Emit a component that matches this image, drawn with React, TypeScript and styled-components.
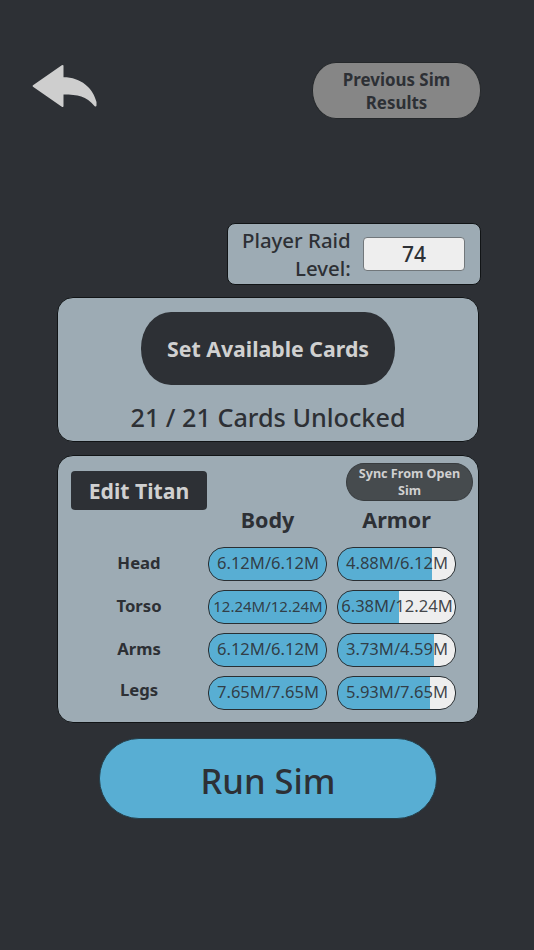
import React from "react";
import styled, { createGlobalStyle } from "styled-components";

const ink = "#2d3035";
const slate = "#9dabb4";
const blue = "#58aed3";

const GlobalStyle = createGlobalStyle`
  *, *::before, *::after { box-sizing: border-box; }
  html, body { margin: 0; background: ${ink}; }
  body { font-family: "Noto Sans", "Open Sans", sans-serif; color: ${ink}; }
  button, input { font: inherit; color: inherit; margin: 0; padding: 0; border: 0; }
`;

const Screen = styled.main`
  display: flex;
  flex-direction: column;
  width: 534px;
  height: 950px;
  padding: 62px 53px 0 32px;
  overflow: hidden;
  background: ${ink};
`;

const TopBar = styled.header`
  display: flex;
  justify-content: space-between;
  align-items: flex-start;
  height: 161px;
`;

const BackButton = styled.button`
  width: 66px;
  height: 48px;
  background: none;
  svg { display: block; }
`;

const Label = styled.span<{ $size: number; $weight?: number; $line?: number; $shift?: number; $drop?: number }>`
  display: block;
  white-space: pre-line;
  font-size: ${(p) => p.$size}px;
  font-weight: ${(p) => p.$weight ?? 700};
  line-height: ${(p) => (p.$line ? `${p.$line}px` : 1)};
  padding-top: ${(p) => p.$drop ?? 0}px;
  padding-bottom: ${(p) => p.$shift ?? 0}px;
`;

const ResultsButton = styled.button`
  display: flex;
  align-items: center;
  justify-content: center;
  width: 169px;
  height: 57px;
  border: 1px solid #25282b;
  border-radius: 24px / 28px;
  background: #868686;
  text-align: center;
`;

const Panel = styled.section`
  border: 1.5px solid #111416;
  border-radius: 16px;
  background: ${slate};
`;

const LevelPanel = styled(Panel)`
  display: flex;
  align-items: center;
  justify-content: space-between;
  align-self: flex-end;
  width: 254px;
  height: 62px;
  padding: 0 15px 0 14px;
  border-radius: 8px;
  text-align: right;
`;

const LevelInput = styled.input`
  width: 102px;
  height: 34px;
  && { border: 1px solid #71777b; }
  border-radius: 4px;
  background: #eee;
  text-align: center;
  && { font-size: 21px; font-weight: 500; }
`;

const CardsPanel = styled(Panel)`
  display: flex;
  flex-direction: column;
  align-items: center;
  width: 422px;
  height: 145px;
  margin: 12px 0 0 25px;
  padding-top: 14px;
`;

const CardsButton = styled.button`
  width: 254px;
  height: 73px;
  margin-bottom: 14px;
  border-radius: 30px / 36px;
  background: ${ink};
  display: flex;
  align-items: center;
  justify-content: center;
  && { color: #d0d0d0; }
`;

const TitanPanel = styled(Panel)`
  width: 422px;
  height: 268px;
  margin: 13px 0 0 25px;
`;

const TitanHeader = styled.div`
  display: flex;
  justify-content: space-between;
  height: 50px;
  padding: 7px 5px 0 13px;
`;

const EditButton = styled.button`
  width: 136px;
  height: 39px;
  margin-top: 8px;
  border-radius: 4px;
  background: ${ink};
  display: flex;
  align-items: center;
  justify-content: center;
  && { color: #d0d0d0; }
`;

const SyncButton = styled.button`
  width: 127px;
  height: 38px;
  border-radius: 18px / 19px;
  background: #464b4e;
  display: flex;
  align-items: center;
  justify-content: center;
  && { color: #d0d0d0; border: 1px solid #383c3f; }
`;

const PartGrid = styled.div`
  display: grid;
  grid-template-columns: 139px 119px 119px;
  grid-template-rows: 36px repeat(4, 43px);
  column-gap: 10px;
  padding-left: 1px;
  align-items: center;
  text-align: center;
`;

const PartName = styled.div`
  padding-left: 21px;
`;

const Meter = styled.div<{ $fill: number }>`
  display: flex;
  align-items: center;
  justify-content: center;
  height: 34px;
  border: 1.5px solid #292f33;
  border-radius: 16px;
  padding-left: 1px;
  color: rgba(45, 48, 53, 0.9);
  white-space: nowrap;
  background: linear-gradient(to right, ${blue} ${(p) => p.$fill}%, #eee ${(p) => p.$fill}%);
`;

const RunButton = styled.button`
  display: flex;
  align-items: center;
  justify-content: center;
  width: 338px;
  height: 81px;
  margin: 15px 0 0 67px;
  border-radius: 40px;
  background: ${blue};
  && { border: 1px solid #24404c; }
`;

const parts = [
  { name: "Head", body: "6.12M/6.12M", armor: "4.88M/6.12M", fill: 80.6 },
  { name: "Torso", body: "12.24M/12.24M", armor: "6.38M/12.24M", fill: 52 },
  { name: "Arms", body: "6.12M/6.12M", armor: "3.73M/4.59M", fill: 82 },
  { name: "Legs", body: "7.65M/7.65M", armor: "5.93M/7.65M", fill: 78.6 },
];

const valueSize = (text: string) => (text.length > 12 ? 15 : 16.6);

export default function App() {
  return (
    <>
      <GlobalStyle />
      <Screen>
        <TopBar>
          <BackButton aria-label="Back">
            <svg width="66" height="48" viewBox="0 0 66 48" fill="#cecece">
              <path d="M1 23.2 29.8 3.3Q31.5 2.2 31.5 4V15.2C49 15.2 61 26 64.5 40V43.5Q64.2 45.3 62.7 44.2C54 34 46 32.5 31.5 32.5V44Q31.5 45.7 29.8 44.7L1 24.8Q0 24 1 23.2Z" />
            </svg>
          </BackButton>
          <ResultsButton>
            <Label $size={16.9} $line={23}>{"Previous Sim\nResults"}</Label>
          </ResultsButton>
        </TopBar>

        <LevelPanel>
          <Label $size={20.4} $weight={500} $line={28}>{"Player Raid\nLevel:"}</Label>
          <LevelInput aria-label="Player Raid Level" defaultValue="74" />
        </LevelPanel>

        <CardsPanel>
          <CardsButton>
            <Label $size={21.3}>Set Available Cards</Label>
          </CardsButton>
          <Label $size={25.2} $weight={500} $line={36}>21 / 21 Cards Unlocked</Label>
        </CardsPanel>

        <TitanPanel>
          <TitanHeader>
            <EditButton>
              <Label $size={21.2}>Edit Titan</Label>
            </EditButton>
            <SyncButton>
              <Label $size={12.6} $line={17}>{"Sync From Open\nSim"}</Label>
            </SyncButton>
          </TitanHeader>
          <PartGrid>
            <span />
            <Label $size={21.5} $shift={8}>Body</Label>
            <Label $size={21.5} $shift={8}>Armor</Label>
            {parts.map((part) => (
              <React.Fragment key={part.name}>
                <PartName>
                  <Label $size={16.7} $shift={part.name === "Legs" ? 4 : 0}>{part.name}</Label>
                </PartName>
                <Meter $fill={100}>
                  <Label $size={valueSize(part.body)} $weight={400}>{part.body}</Label>
                </Meter>
                <Meter $fill={part.fill}>
                  <Label $size={valueSize(part.armor)} $weight={400}>{part.armor}</Label>
                </Meter>
              </React.Fragment>
            ))}
          </PartGrid>
        </TitanPanel>

        <RunButton>
          <Label $size={34.5} $weight={500} $line={48} $drop={5}>Run Sim</Label>
        </RunButton>
      </Screen>
    </>
  );
}
